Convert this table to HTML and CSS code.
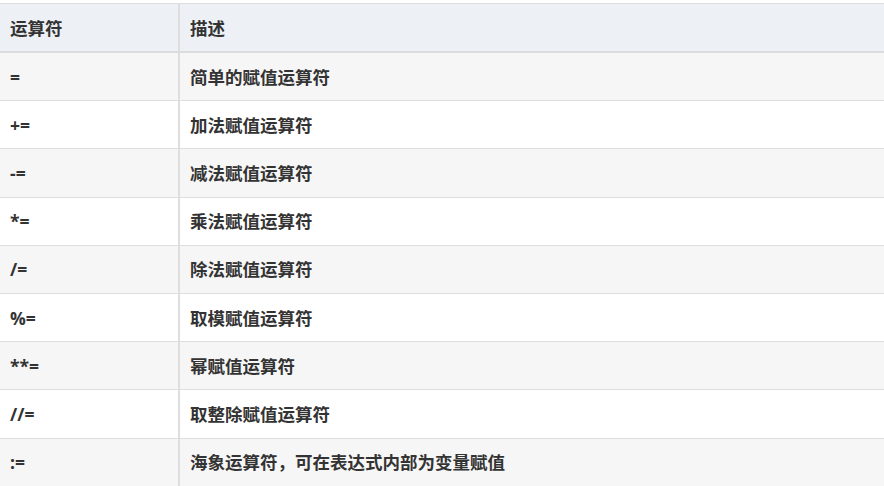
FILE: index.html
```html
<!DOCTYPE html>
<html lang="zh">
<head>
<meta charset="utf-8">
<link rel="stylesheet" href="styles.css">
</head>
<body>
<table class="ops">
  <thead>
    <tr><th class="c1">运算符</th><th class="c2">描述</th></tr>
  </thead>
  <tbody>
    <tr><td class="c1">=</td><td class="c2">简单的赋值运算符</td></tr>
    <tr><td class="c1">+=</td><td class="c2">加法赋值运算符</td></tr>
    <tr><td class="c1">-=</td><td class="c2">减法赋值运算符</td></tr>
    <tr><td class="c1">*=</td><td class="c2">乘法赋值运算符</td></tr>
    <tr><td class="c1">/=</td><td class="c2">除法赋值运算符</td></tr>
    <tr><td class="c1">%=</td><td class="c2">取模赋值运算符</td></tr>
    <tr><td class="c1">**=</td><td class="c2">幂赋值运算符</td></tr>
    <tr><td class="c1">//=</td><td class="c2">取整除赋值运算符</td></tr>
    <tr><td class="c1">:=</td><td class="c2">海象运算符，可在表达式内部为变量赋值</td></tr>
  </tbody>
</table>
</body>
</html>
```
FILE: styles.css
```css
html, body {
  margin: 0;
  padding: 0;
  background: #fff;
}
body {
  padding-top: 3px;
  font-family: "Open Sans", "Noto Sans CJK SC", sans-serif;
  color: #333;
}
.ops {
  width: 884px;
  border-collapse: collapse;
  table-layout: fixed;
  font-size: 17.5px;
  font-weight: bold;
}
.ops th, .ops td {
  height: 47.2px;
  padding: 0 10px;
  text-align: left;
  vertical-align: middle;
  border-top: 1px solid #dedede;
  border-bottom: 1px solid #dedede;
  line-height: 20px;
}
.ops .c1 {
  width: 158px;
  border-right: 2px solid #dedede;
}
.ops .c2 {
  padding-left: 10px;
}
.ops thead th {
  background: #edf1f5;
  border-bottom: 2px solid #dcdcdc;
  height: 47px;
}
.ops tbody tr:nth-child(odd) td {
  background: #f6f6f6;
}
.ops tbody tr:nth-child(even) td {
  background: #fff;
}
```
